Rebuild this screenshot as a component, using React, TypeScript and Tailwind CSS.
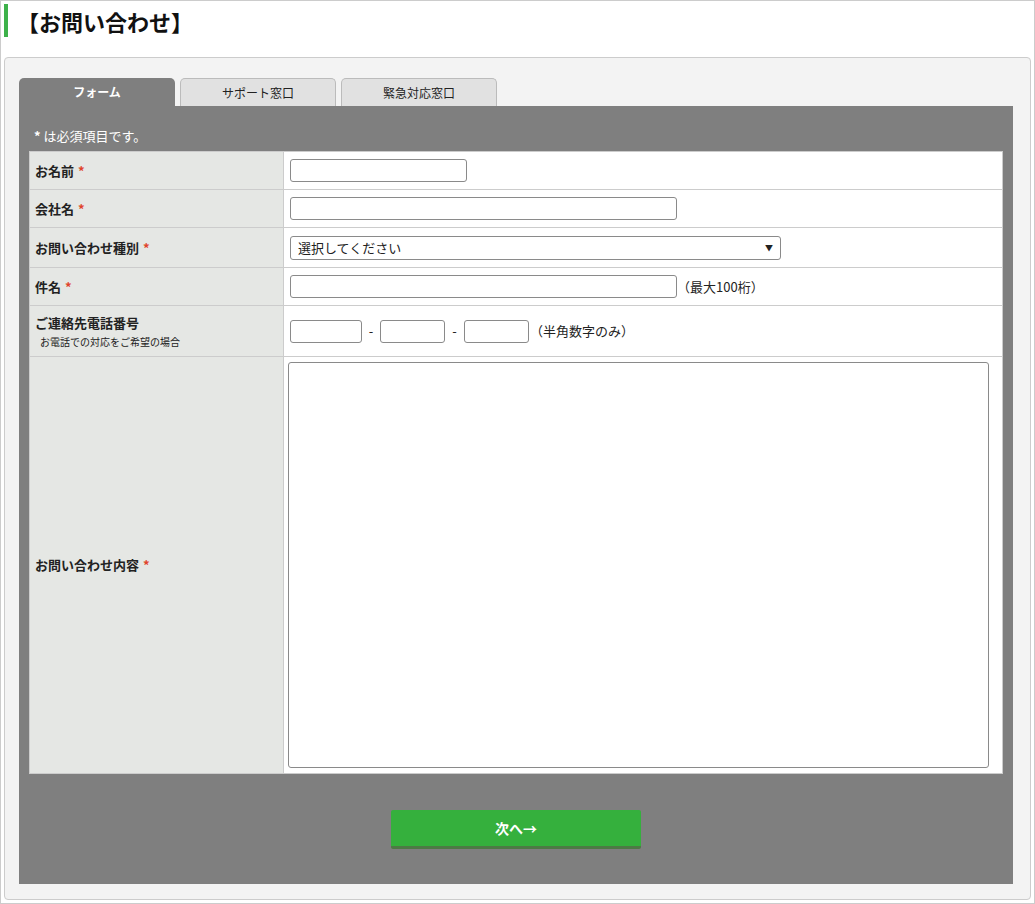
import React from 'react';

const font = { fontFamily: '"Noto Sans CJK JP", "Noto Sans", sans-serif' };

const Req = () => <span className="ml-1 text-[#e0442a]">*</span>;

const inputCls = 'h-[23px] rounded-[3px] border border-[#8a8a8a] bg-white px-1 text-[13px] outline-none';

const App = () => {
    const tabs = ['フォーム', 'サポート窓口', '緊急対応窓口'];

    return (
        <div className="h-[904px] w-[1035px] overflow-hidden border border-[#cccccc] bg-white text-[#222]" style={font}>
            <div className="ml-[3px] mt-[3px] flex h-[33px] items-center border-l-4 border-[#3db14a] pl-[9px]">
                <h1 className="text-[22px] font-bold leading-none text-[#111]">【お問い合わせ】</h1>
            </div>

            <div className="mx-[3px] mt-[20px] h-[843px] rounded-[4px] border border-[#cccccc] bg-[#f3f3f3] px-[14px] pt-[20px]">
                <div className="flex gap-[5px]">
                    {tabs.map((t, i) => (
                        <div
                            key={t}
                            className={
                                i === 0
                                    ? 'flex h-[28px] w-[156px] items-center justify-center rounded-t-[5px] bg-[#7f7f7f] text-[12px] font-bold text-white'
                                    : 'flex h-[28px] w-[156px] items-center justify-center rounded-t-[5px] border border-b-0 border-[#bbbbbb] bg-[#e1e1e1] text-[12px] text-[#222]'
                            }
                        >
                            {t}
                        </div>
                    ))}
                </div>

                <div className="h-[778px] w-[994px] bg-[#7f7f7f] px-[10px] pt-[19px]">
                    <p className="mb-[5px] pl-[5px] text-[13px] leading-[21px] text-white"><span className="font-bold">*</span> は必須項目です。</p>
                    <table className="w-[974px] table-fixed border-collapse bg-white text-[13px]">
                        <tbody>
                            <tr className="h-[38px]">
                                <th className="w-[254px] border border-[#cccccc] bg-[#e5e7e4] pl-[5px] text-left font-bold">お名前<Req /></th>
                                <td className="border border-[#cccccc] px-[6px]"><input className={`${inputCls} w-[177px]`} /></td>
                            </tr>
                            <tr className="h-[38px]">
                                <th className="border border-[#cccccc] bg-[#e5e7e4] pl-[5px] text-left font-bold">会社名<Req /></th>
                                <td className="border border-[#cccccc] px-[6px]"><input className={`${inputCls} w-[387px]`} /></td>
                            </tr>
                            <tr className="h-[40px]">
                                <th className="border border-[#cccccc] bg-[#e5e7e4] pl-[5px] text-left font-bold">お問い合わせ種別<Req /></th>
                                <td className="border border-[#cccccc] px-[6px]">
                                    <div className="flex h-[24px] w-[491px] items-center justify-between rounded-[3px] border border-[#8a8a8a] bg-white pl-[7px] pr-[7px] text-[13px]">
                                        <span>選択してください</span>
                                        <span className="text-[8px]">▼</span>
                                    </div>
                                </td>
                            </tr>
                            <tr className="h-[38px]">
                                <th className="border border-[#cccccc] bg-[#e5e7e4] pl-[5px] text-left font-bold">件名<Req /></th>
                                <td className="border border-[#cccccc] px-[6px]">
                                    <div className="flex items-center">
                                        <input className={`${inputCls} w-[387px]`} />
                                        <span className="text-[13px]">（最大100桁）</span>
                                    </div>
                                </td>
                            </tr>
                            <tr className="h-[51px]">
                                <th className="border border-[#cccccc] bg-[#e5e7e4] pl-[5px] text-left font-bold">
                                    <div className="leading-[22px]">ご連絡先電話番号</div>
                                    <div className="pl-[5px] text-[10px] font-normal leading-[16px]">お電話での対応をご希望の場合</div>
                                </th>
                                <td className="border border-[#cccccc] px-[6px]">
                                    <div className="flex items-center text-[13px]">
                                        <input className={`${inputCls} w-[72px]`} />
                                        <span className="w-[18px] text-center">-</span>
                                        <input className={`${inputCls} w-[65px]`} />
                                        <span className="w-[19px] text-center">-</span>
                                        <input className={`${inputCls} w-[65px]`} />
                                        <span className="ml-[1px]">（半角数字のみ）</span>
                                    </div>
                                </td>
                            </tr>
                            <tr className="h-[417px]">
                                <th className="border border-[#cccccc] bg-[#e5e7e4] pl-[5px] text-left font-bold">お問い合わせ内容<Req /></th>
                                <td className="border border-[#cccccc] pl-[4px] pr-[14px]">
                                    <textarea className="block h-[406px] w-[701px] resize-none rounded-[3px] border border-[#8a8a8a] bg-white outline-none" />
                                </td>
                            </tr>
                        </tbody>
                    </table>

                    <div className="mt-[36px] flex justify-center">
                        <button
                            type="button"
                            className="h-[39px] w-[250px] rounded-[2px] border-b-[3px] border-[#4d7a45] bg-[#35b03d] text-[14px] font-bold text-white"
                        >
                            次へ→
                        </button>
                    </div>
                </div>
            </div>
        </div>
    );
};

export default App;
